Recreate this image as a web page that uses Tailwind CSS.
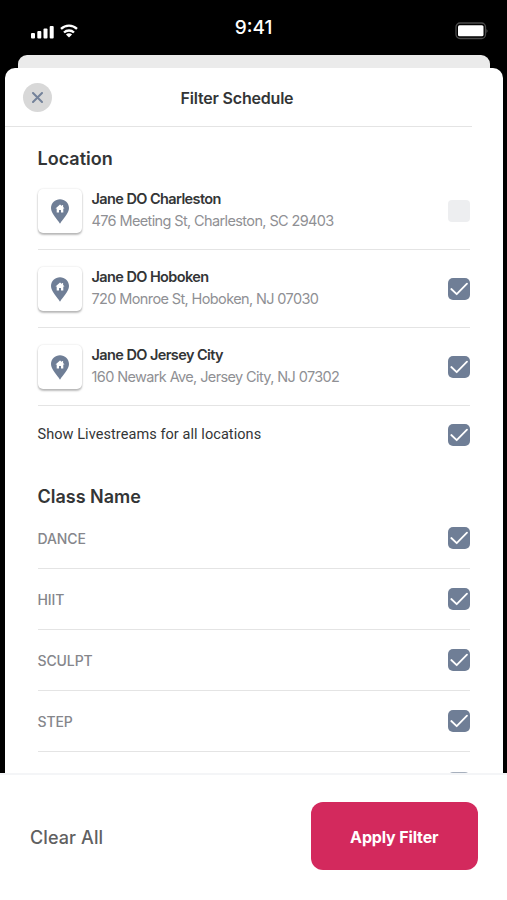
<!DOCTYPE html>
<html lang="en">
<head>
  <meta charset="UTF-8">
  <meta name="viewport" content="width=device-width, initial-scale=1">
  <title>Filter Schedule</title>
  <script src="https://cdn.jsdelivr.net/npm/@tailwindcss/browser@4"></script>
</head>
<body class="bg-black font-['Inter',sans-serif] text-[#333536]">
  <svg class="hidden">
    <symbol id="pin" viewBox="0 0 18 25">
      <path fill="#6f7e96" d="M9 .3C4.1.3 0 4.2 0 9.1 0 14.500 6 20 9 24.700 12 20 18 14.500 18 9.100 18 4.200 13.900.3 9 .3Z"/>
      <path fill="#fff" d="M9 5.400 4.500 9.400h1.200V13.400h2.300v-2.500h2v2.500h2.300V9.400h1.200l-1.400-1.300V6h-1v1Z"/>
    </symbol>
    <symbol id="check" viewBox="0 0 22 22">
      <path fill="none" stroke="#fff" stroke-width="1.800" stroke-linecap="round" stroke-linejoin="round" d="M3.300 11 8.700 16.200 19 5.700"/>
    </symbol>
  </svg>

  <div class="h-[900px] w-[507px] flex flex-col overflow-hidden">
    <!-- Status bar -->
    <div class="h-[55px] shrink-0 grid grid-cols-3 text-white">
      <div class="flex gap-[6px] pl-[31px] pt-[24px]">
        <svg class="w-[23px] h-[15px]" viewBox="0 0 23 15" fill="#fff">
          <rect x="0" y="9" width="4" height="5.500" rx="1"/>
          <rect x="6.300" y="7" width="4" height="7.500" rx="1"/>
          <rect x="12.500" y="4.500" width="4" height="10" rx="1"/>
          <rect x="18.700" y="2" width="4" height="12.500" rx="1"/>
        </svg>
        <svg class="w-[18px] h-[14px]" viewBox="0 0 18 14" fill="none" stroke="#fff" stroke-width="2.300">
          <path d="M1 4.800a11.500 11.500 0 0 1 16 0"/>
          <path d="M4 8.500a7.200 7.200 0 0 1 10 0"/>
          <path fill="#fff" stroke="none" d="M9 13.500 5.900 10.600a4.600 4.600 0 0 1 6.200 0Z"/>
        </svg>
      </div>
      <div class="pt-[14px] text-center text-[19px] leading-7 font-medium">9:41</div>
      <div class="flex justify-end pr-[18px] pt-[22px]">
        <svg class="w-[34px] h-[18px]" viewBox="0 0 34 18">
          <rect x="1" y="1" width="29.500" height="15.500" rx="4" fill="none" stroke="#4a4a4a" stroke-width="1.300"/>
          <rect x="3" y="3.300" width="25.500" height="11" rx="1.500" fill="#fff"/>
          <path d="M31.500 7v4q2-2 0-4Z" fill="#5a5a5a"/>
        </svg>
      </div>
    </div>

    <div class="h-[13px] shrink-0 ml-[18px] mr-[17px] bg-[#ebebeb] rounded-t-[9px]"></div>

    <!-- Filter sheet -->
    <div class="h-[705px] shrink-0 ml-[5px] mr-[4px] pr-[31px] bg-white rounded-t-[10px] overflow-hidden">
      <div class="h-[59px] border-b border-[#e4e4e4] grid grid-cols-[60px_1fr_81px] items-center pl-[18px] pt-px">
        <button class="size-[29px] rounded-full bg-[#d8d8d8] flex items-center justify-center">
          <svg class="size-[11px]" viewBox="0 0 11 11" stroke="#74829a" stroke-width="2" stroke-linecap="round">
            <path d="M1 1l9 9M10 1l-9 9"/>
          </svg>
        </button>
        <h1 class="text-center text-[16px] font-semibold tracking-[-0.200px]">Filter Schedule</h1>
      </div>

      <div class="pl-[32.500px] pr-[2px]">
        <h2 class="h-[45px] pt-[18px] text-[18px] leading-7 font-semibold">Location</h2>
        <div id="locations"></div>
        <div class="h-[57px] flex items-center justify-between">
          <span class="pt-px font-[Roboto,sans-serif] text-[14.500px] tracking-[0.070px]">Show Livestreams for all locations</span>
          <span class="size-[22px] rounded-[5px] bg-[#6f7e96]"><svg class="size-[22px]"><use href="#check"/></svg></span>
        </div>
        <h2 class="h-[45px] pt-[20px] text-[18px] leading-7 font-semibold">Class Name</h2>
        <div id="classes"></div>
      </div>
    </div>

    <!-- Footer -->
    <div class="h-[127px] shrink-0 bg-white border-t-2 border-[#f4f5f7] flex items-center justify-between pl-[30px] pr-[29.500px] pb-[3px]">
      <button class="pt-[2px] text-[18px] text-[#5f6061] font-medium tracking-[0.100px]">Clear All</button>
      <button class="w-[166.500px] h-[68px] pt-[2px] rounded-[12px] bg-[#d3295d] text-white text-[16px] font-bold tracking-[-0.150px]">Apply Filter</button>
    </div>
  </div>

  <script>
    const locations = [
      { name: 'Jane DO Charleston', address: '476 Meeting St, Charleston, SC 29403', on: false },
      { name: 'Jane DO Hoboken', address: '720 Monroe St, Hoboken, NJ 07030', on: true },
      { name: 'Jane DO Jersey City', address: '160 Newark Ave, Jersey City, NJ 07302', on: true },
    ];
    const classes = ['DANCE', 'HIIT', 'SCULPT', 'STEP'];

    function checkbox(on) {
      return on
        ? '<span class="size-[22px] rounded-[5px] bg-[#6f7e96]"><svg class="size-[22px]"><use href="#check"/></svg></span>'
        : '<span class="size-[22px] rounded-[4px] bg-[#edeef0]"></span>';
    }

    document.getElementById('locations').innerHTML = locations.map(l => `
      <div class="h-[78px] border-b border-[#e4e4e4] flex items-center pt-px">
        <div class="size-[44px] rounded-[5px] bg-white shadow-[0_2px_2px_rgba(0,0,0,0.25),0_0_2px_rgba(0,0,0,0.15)] flex items-center justify-center">
          <svg class="w-[18px] h-[25px]"><use href="#pin"/></svg>
        </div>
        <div class="ml-[10px] pb-[2px] flex-1 whitespace-nowrap">
          <div class="text-[14.500px] leading-[22px] font-semibold tracking-[-0.590px]">${l.name}</div>
          <div class="text-[14.500px] leading-[22px] text-[#8f9094] tracking-[-0.620px]">${l.address}</div>
        </div>
        ${checkbox(l.on)}
      </div>
    `).join('');

    // the last row is cut off by the footer, only the edge of its box shows
    document.getElementById('classes').innerHTML = classes.map(c => `
      <div class="h-[61px] border-b border-[#e4e4e4] flex items-center justify-between">
        <span class="text-[14px] font-medium tracking-[-0.100px] text-[#85868b]">${c}</span>
        ${checkbox(true)}
      </div>
    `).join('') + `
      <div class="h-[61px] flex items-center justify-end">
        <span class="size-[22px] rounded-[5px] bg-[#a7b0bd]"></span>
      </div>
    `;
  </script>
</body>
</html>
